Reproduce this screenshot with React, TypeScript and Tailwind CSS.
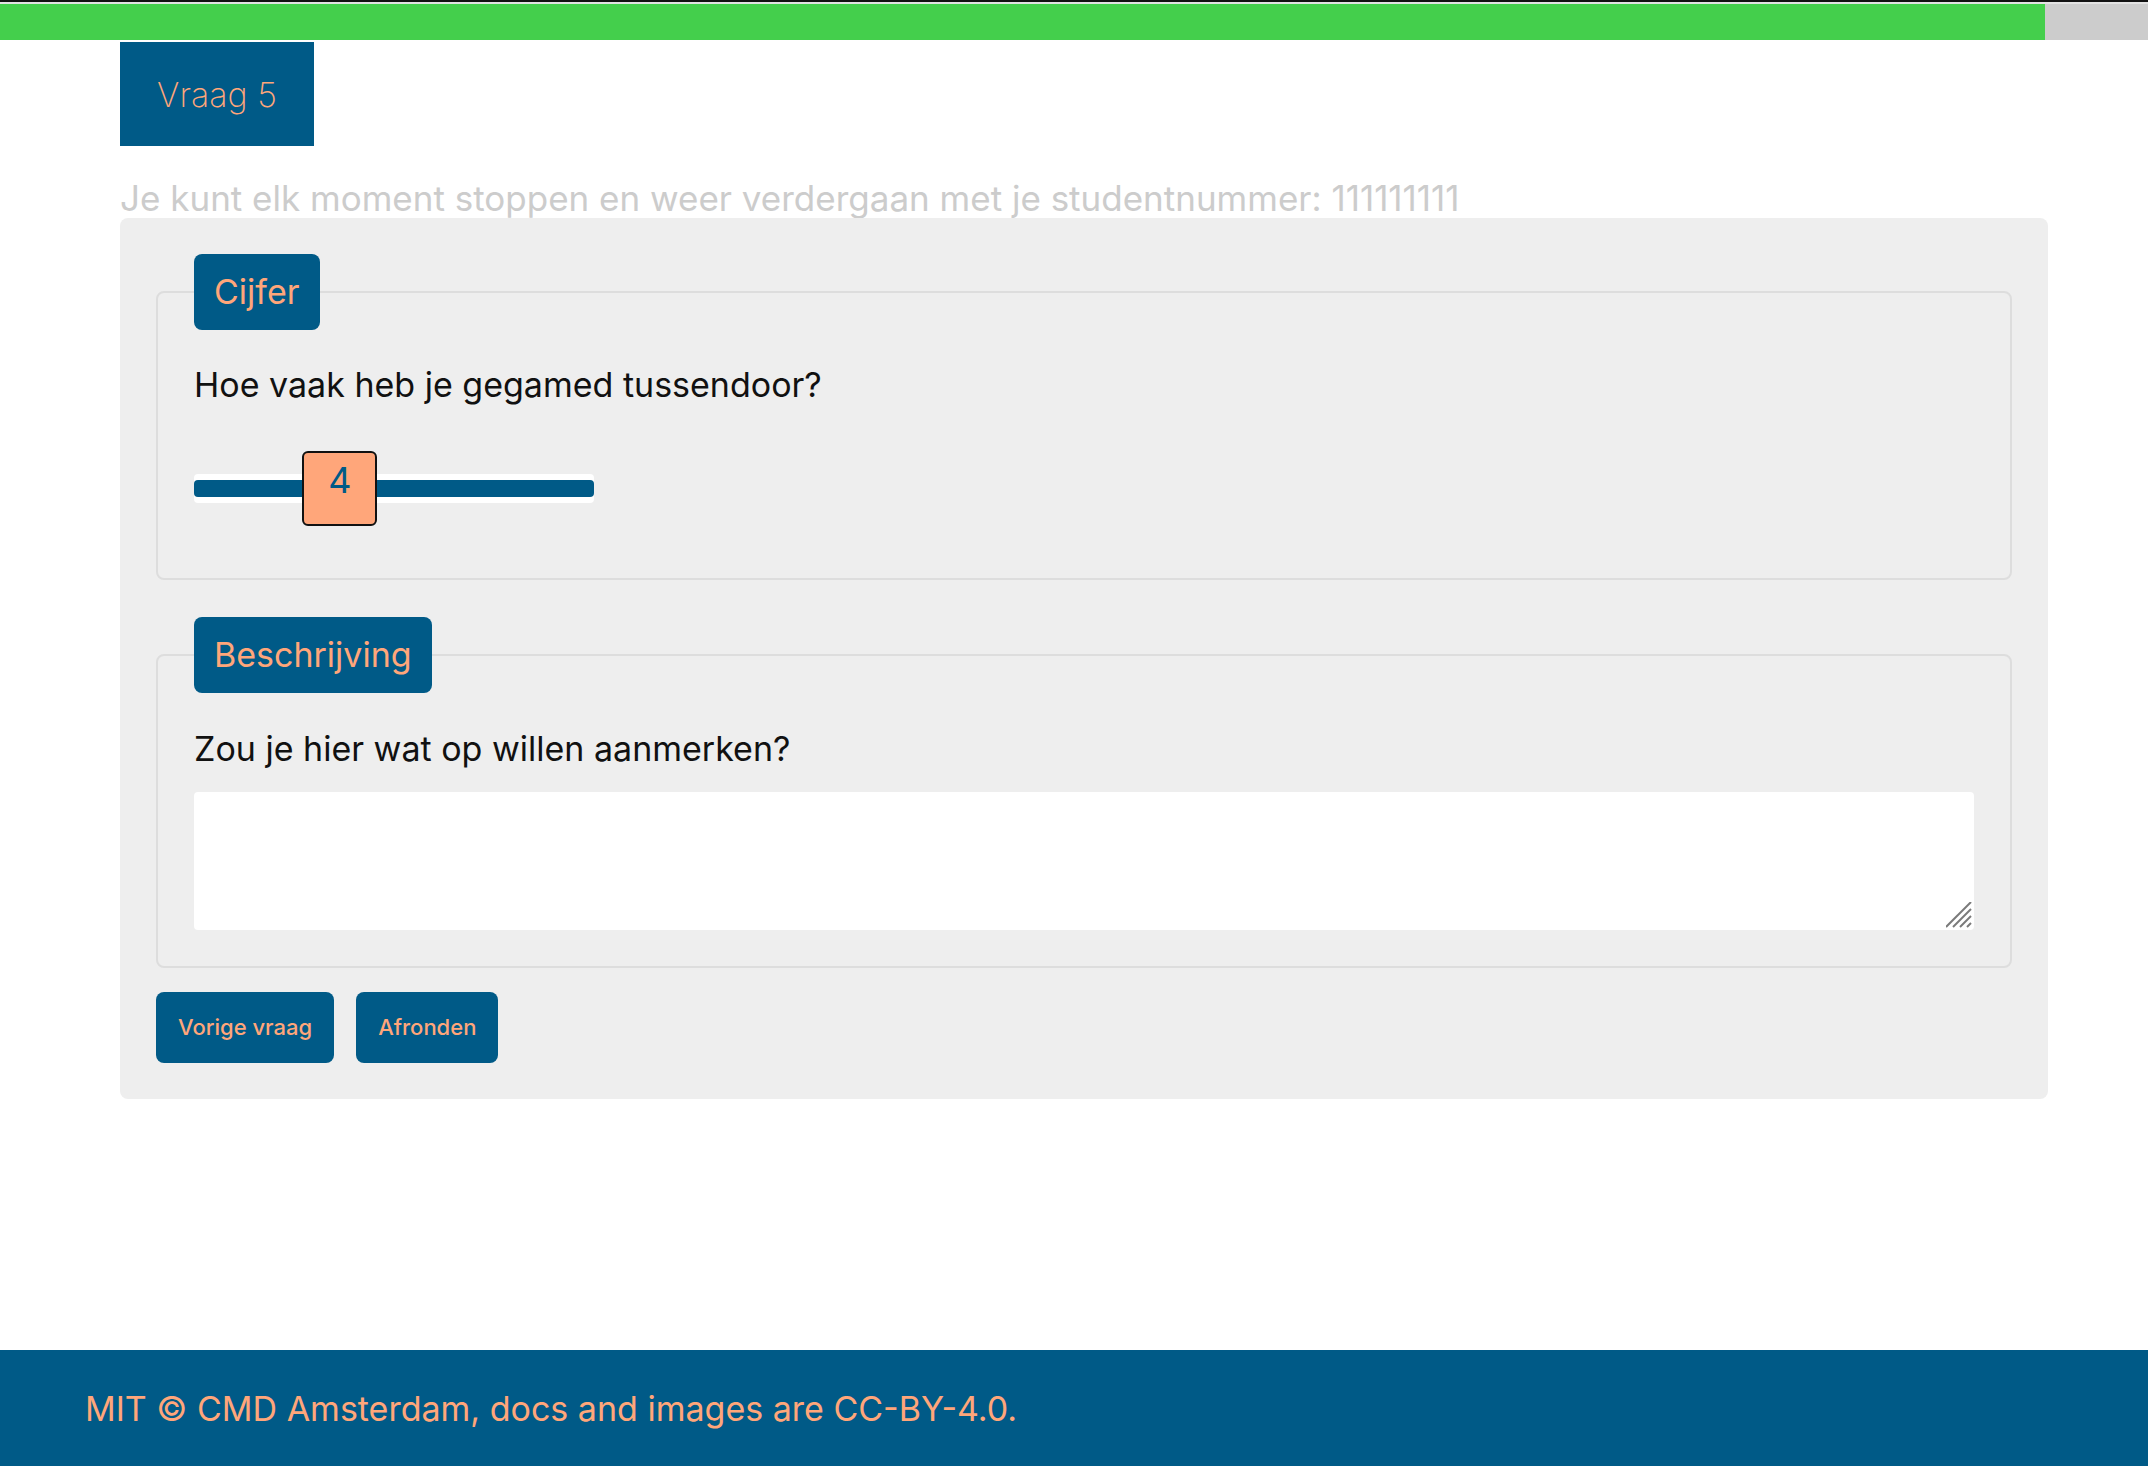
import { useState } from "react";

export default function App() {
  const [score] = useState(4);
  const [remark, setRemark] = useState("");

  // range 1..10, track 400px, thumb 75px
  const thumbLeft = ((score - 1) / 9) * (400 - 75);

  return (
    <div className="min-h-screen flex flex-col bg-white font-['Inter','Noto_Sans',sans-serif]">
      {/* voortgang */}
      <div className="h-[2px] bg-[#111111]" />
      <div className="h-[2px] bg-[#e2e2e2]" />
      <div className="flex h-[36px] bg-[#cccccc]">
        <div className="w-[2045px] bg-[#44cf4c]" />
      </div>

      <main className="flex-1 ml-[120px] w-[1928px]">
        <div className="mt-[2px] flex h-[104px] w-[194px] items-center justify-center bg-[#005a87] text-[34px] font-extralight text-[#ffa67a]">
          Vraag 5
        </div>

        <p className="mt-[35px] h-[37px] overflow-hidden text-[35px] leading-[35px] text-[#cccccc]">
          Je kunt elk moment stoppen en weer verdergaan met je studentnummer: 111111111
        </p>

        <form className="rounded-lg bg-[#eeeeee] p-9" onSubmit={(e) => e.preventDefault()}>
          <fieldset className="rounded-lg border-2 border-[#dddddd] px-9 pt-[31px] pb-9">
            <legend className="rounded-lg bg-[#005a87] px-[20px] text-[34px] leading-[76px] text-[#ffa67a]">
              Cijfer
            </legend>
            <p className="mb-[22px] text-[34px] leading-[48px] text-[#111111]">
              Hoe vaak heb je gegamed tussendoor?
            </p>
            <div className="pt-5 pb-4">
              <div className="relative flex h-[75px] w-[400px] items-center">
                <div className="h-[29px] w-full rounded bg-white py-[6px]">
                  <div className="h-[17px] w-full rounded-sm bg-[#005a87]" />
                </div>
                <div
                  className="absolute top-0 flex h-[75px] w-[75px] justify-center rounded-md border-2 border-[#111111] bg-[#ffa67a] pt-[9px] text-[36px] leading-none text-[#005a87]"
                  style={{ left: thumbLeft }}
                >
                  {score}
                </div>
              </div>
            </div>
          </fieldset>

          <fieldset className="mt-[37px] rounded-lg border-2 border-[#dddddd] px-9 pt-[32px] pb-9">
            <legend className="rounded-lg bg-[#005a87] px-[20px] text-[34px] leading-[76px] text-[#ffa67a]">
              Beschrijving
            </legend>
            <p className="mb-[19px] text-[34px] leading-[48px] text-[#111111]">
              Zou je hier wat op willen aanmerken?
            </p>
            <div className="relative">
              <textarea
                value={remark}
                onChange={(e) => setRemark(e.target.value)}
                className="block h-[138px] w-full resize-none rounded bg-white p-2 text-[24px] outline-none"
              />
              <svg
                className="pointer-events-none absolute right-[2px] bottom-[2px]"
                width="26"
                height="26"
                viewBox="0 0 26 26"
                fill="none"
                stroke="#7a7a7a"
                strokeWidth="2"
              >
                <line x1="0" y1="25" x2="25" y2="0" />
                <line x1="7" y1="25" x2="25" y2="7" />
                <line x1="14" y1="25" x2="25" y2="14" />
                <line x1="21" y1="25" x2="25" y2="21" />
              </svg>
            </div>
          </fieldset>

          <div className="mt-6 flex gap-[22px]">
            <button type="button" className="h-[71px] rounded-lg bg-[#005a87] px-[22px] text-[22px] font-medium text-[#ffa67a]">
              Vorige vraag
            </button>
            <button type="submit" className="h-[71px] rounded-lg bg-[#005a87] px-[22px] text-[22px] font-medium text-[#ffa67a]">
              Afronden
            </button>
          </div>
        </form>
      </main>

      <footer className="flex h-[116px] items-center bg-[#005a87] px-[85px] text-[34px] text-[#ffa67a]">
        MIT © CMD Amsterdam, docs and images are CC-BY-4.0.
      </footer>
    </div>
  );
}
